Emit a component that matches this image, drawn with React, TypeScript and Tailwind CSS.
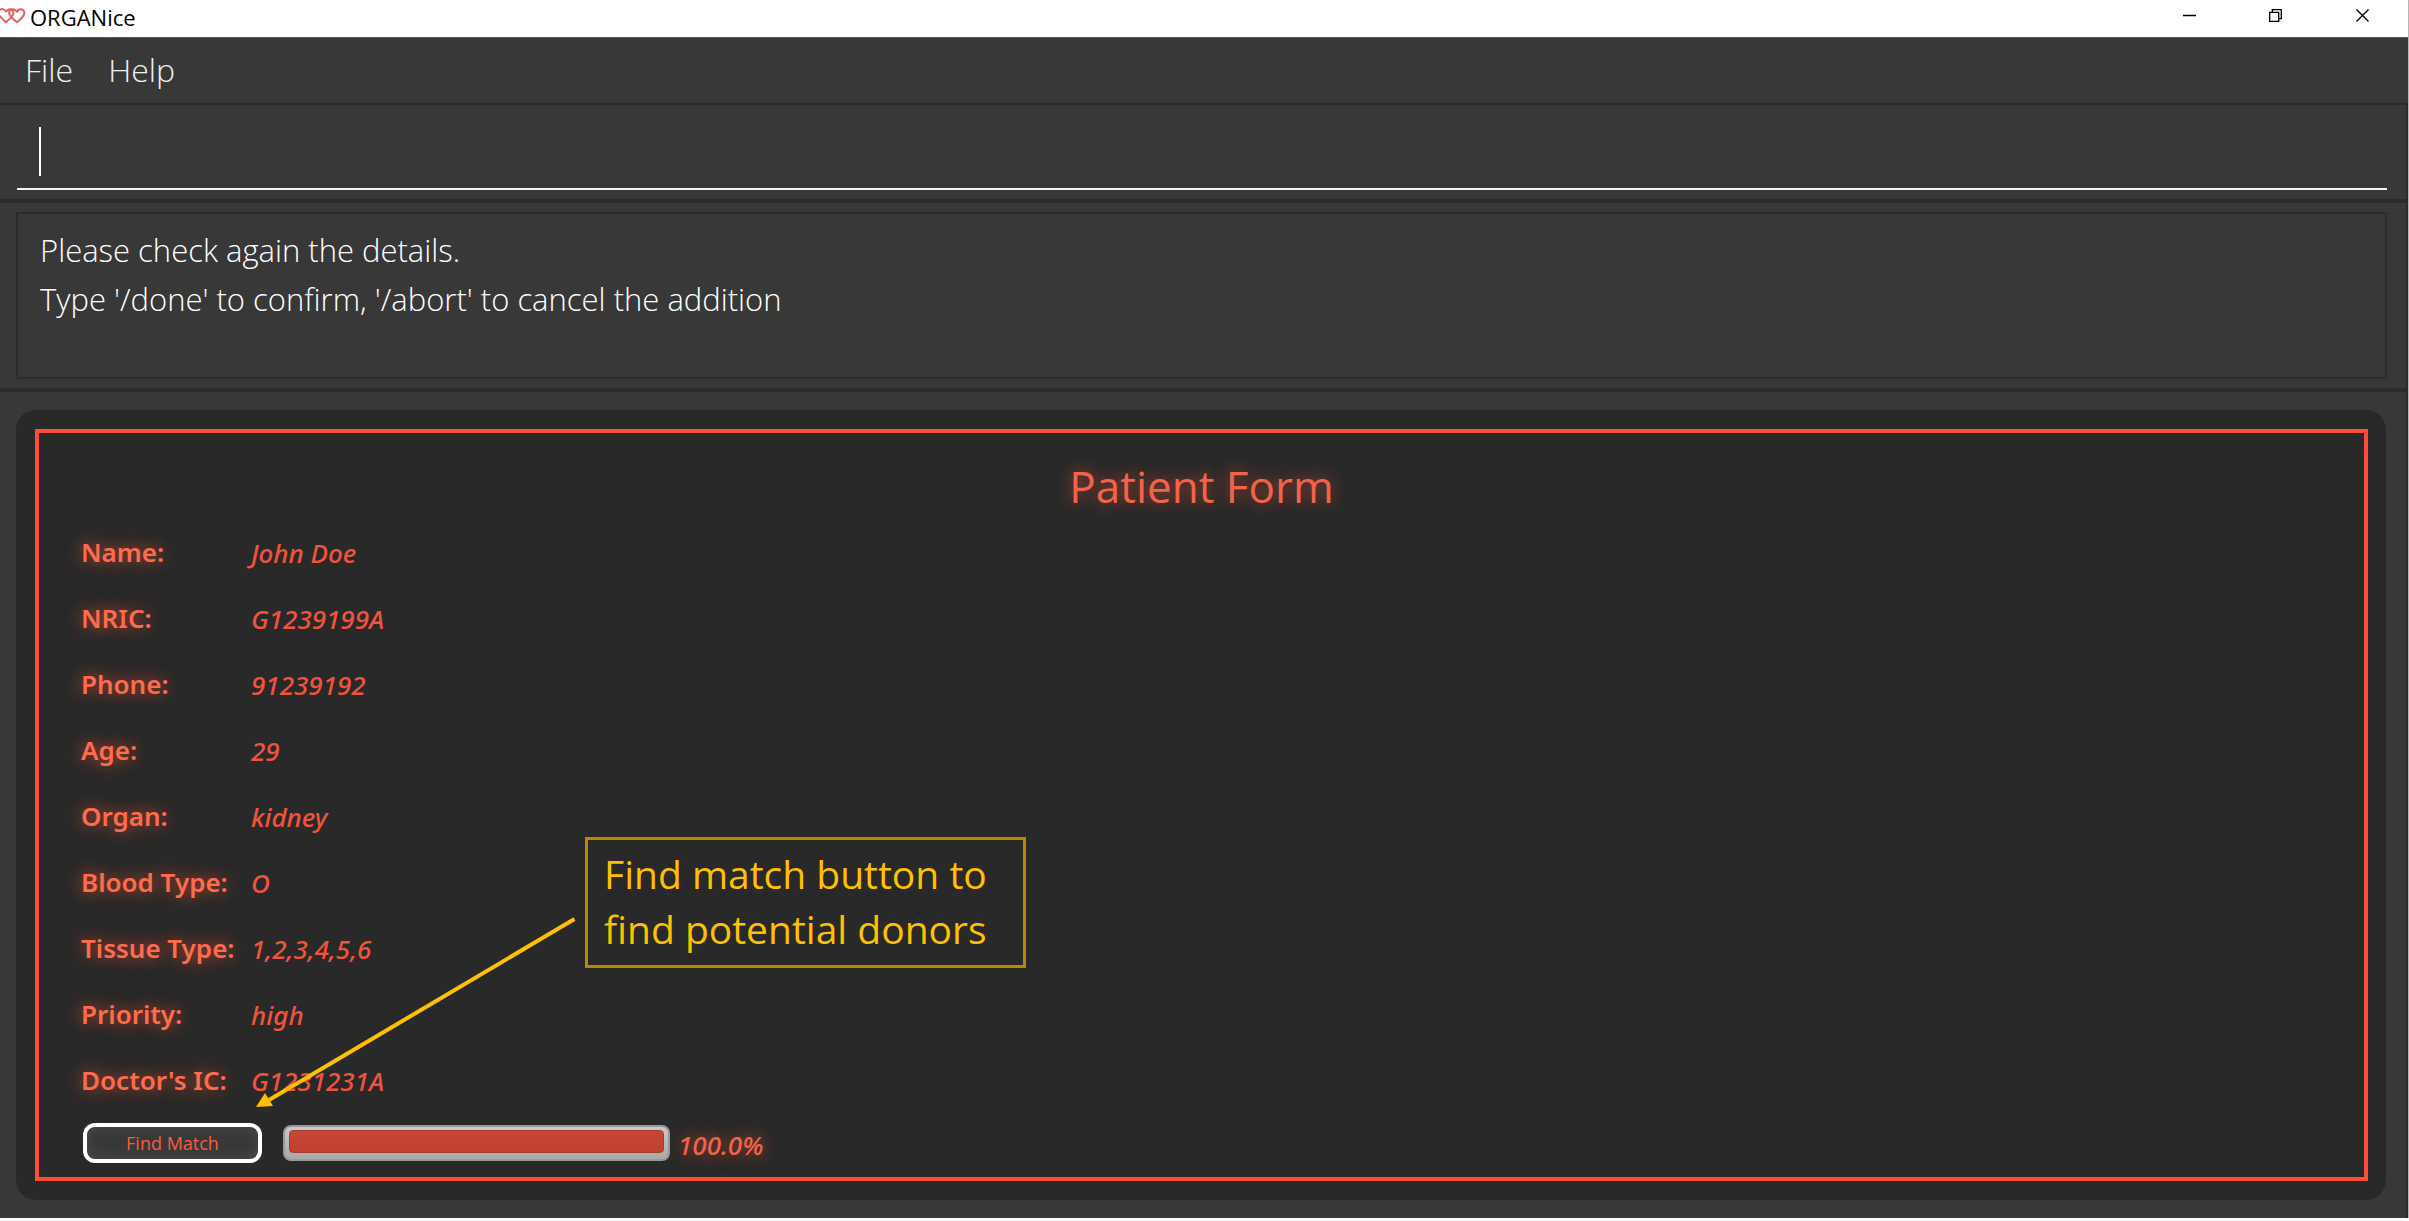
import React from 'react';

const details: [string, string][] = [
  ['Name:', 'John Doe'],
  ['NRIC:', 'G1239199A'],
  ['Phone:', '91239192'],
  ['Age:', '29'],
  ['Organ:', 'kidney'],
  ['Blood Type:', 'O'],
  ['Tissue Type:', '1,2,3,4,5,6'],
  ['Priority:', 'high'],
  ["Doctor's IC:", 'G1231231A'],
];

function Hearts() {
  return (
    <svg viewBox="0 0 26 16" className="h-4 w-[26px]" fill="none" stroke="#e0605e" strokeWidth="2" strokeLinejoin="round" strokeLinecap="round" aria-hidden="true">
      <path d="M-1 2.5 C1 .5 4 .5 6 3.5 C8 .5 12 .5 13.2 3.5 C14.2 6.5 10 11 6 14.2 C3.5 12 1 9.5 -1 7" />
      <path d="M17 14.2 C12 10.5 8.5 7 9.2 4 C10.5 .3 15 .5 17 3.8 C18.5 .5 23 .5 24.3 4 C25 7.5 21 11 17 14.2 Z" />
    </svg>
  );
}

function TitleBar() {
  return (
    <header className="flex h-[37px] items-start justify-between bg-white">
      <div className="flex h-8 items-center gap-1">
        <Hearts />
        <h2 className="pt-0.5 text-[22px] leading-8 text-black">ORGANice</h2>
      </div>
      <div className="flex h-[30px] pr-0.5 text-black">
        <button aria-label="Minimize" className="flex w-[86px] items-center justify-center">
          <svg width="13" height="13" viewBox="0 0 13 13" stroke="currentColor" strokeWidth="1.5"><path d="M0 6.5H13" /></svg>
        </button>
        <button aria-label="Restore" className="flex w-[86px] items-center justify-center">
          <svg width="13" height="13" viewBox="0 0 13 13" fill="none" stroke="currentColor" strokeWidth="1.3"><path d="M.7 3.3H9.7V12.3H.7Z M3.3 3V.7H12.3V9.7H10" /></svg>
        </button>
        <button aria-label="Close" className="flex w-[88px] items-center justify-center">
          <svg width="13" height="13" viewBox="0 0 13 13" stroke="currentColor" strokeWidth="1.4"><path d="M.5 .5L12.5 12.5M12.5 .5L.5 12.5" /></svg>
        </button>
      </div>
    </header>
  );
}

function PatientForm() {
  return (
    <main className="py-[18px] pl-4 pr-5">
      <div className="rounded-[20px] bg-[#292929] p-[19px] pr-[18px]">
        <section className="relative border-4 border-[#ff4f35] px-[42px] pt-5 pb-1 text-[#f1533c]">
          <h1 className="text-center text-[44px] leading-[66px] text-[#f2634a] [text-shadow:0_0_16px_#ff5733aa]">Patient Form</h1>
          <dl className="font-['Noto_Sans',sans-serif] text-[26px]">
            {details.map(([label, value]) => (
              <div key={label} className="flex h-[66px] items-center">
                <dt className="w-[170px] font-semibold text-[#ff6b4d] [text-shadow:0_0_16px_#ff5733cc]">{label}</dt>
                <dd className="pt-0.5 font-medium italic">{value}</dd>
              </div>
            ))}
          </dl>
          <div className="flex h-[60px] items-center">
            <button className="ml-0.5 h-10 w-[179px] rounded-xl border-4 border-white bg-[#383838] text-[18px] leading-none text-[#fb5a42] shadow-[inset_0_0_14px_#4c4c4c]">
              Find Match
            </button>
            <div
              role="progressbar"
              aria-label="Match progress"
              aria-valuenow={100}
              className="ml-[21px] h-9 w-[387px] rounded-lg border-2 border-[#999] bg-linear-to-b from-[#c9c9c9] to-[#a9a9a9] px-1 pt-[3px] pb-[6px]"
            >
              <div className="h-full rounded-[4px] border border-[#a83c2c] bg-linear-to-b from-[#c64735] to-[#c04030]" style={{ width: '100%' }} />
            </div>
            <span className="ml-2 pt-1 font-['Noto_Sans',sans-serif] text-[26px] font-medium italic text-[#f2634a] [text-shadow:0_0_16px_#e8502fcc]">100.0%</span>
          </div>
          <svg className="pointer-events-none absolute left-[210px] top-[480px]" width="330" height="204" viewBox="0 0 330 204" aria-hidden="true">
            <path d="M325.5 6L20 187" stroke="#ffc000" strokeWidth="4" />
            <path d="M7 194L16 180L24 193Z" fill="#ffc000" />
          </svg>
          <p className="absolute left-[546px] top-[404px] border-[3px] border-[#b88a00] pt-[6px] pb-[9px] pl-4 pr-[36px] text-[39px] leading-[55px] whitespace-nowrap text-[#ffc000]">
            Find match button to
            <br />
            find potential donors
          </p>
        </section>
      </div>
    </main>
  );
}

export default function App() {
  return (
    <div className="min-h-screen bg-white pb-[3px] font-['Open_Sans',sans-serif]">
      <div className="border-r border-[#b5b5b5] bg-[#383838]">
        <TitleBar />
        <nav className="flex h-[66px] items-center gap-[35px] border-t border-[#555] pb-0.5 pl-[25px] text-[32px] font-light text-[#f0f0f0]">
          <button>File</button>
          <button>Help</button>
        </nav>
        <div className="border-r-2 border-[#2b2b2b]">
          <div className="h-[100px] border-t-2 border-b-4 border-[#2b2b2b] py-[9px] pl-[17px] pr-[19px]">
            <label className="flex h-full items-center gap-0.5 border-b-2 border-[#f4f4f4] pl-[22px]">
              <span className="h-[49px] w-0.5 bg-white" />
              <input aria-label="Command" className="w-full bg-transparent text-[31px] font-light text-white outline-none" />
            </label>
          </div>
          <div className="border-b-4 border-[#2b2b2b] py-[9px] pl-4 pr-[19px]">
            <output className="block min-h-[167px] border-2 border-[#2c2c2c] px-[22px] pt-3 text-[31px] font-light leading-[49px] text-white">
              Please check again the details.
              <br />
              Type '/done' to confirm, '/abort' to cancel the addition
            </output>
          </div>
          <PatientForm />
        </div>
      </div>
    </div>
  );
}
